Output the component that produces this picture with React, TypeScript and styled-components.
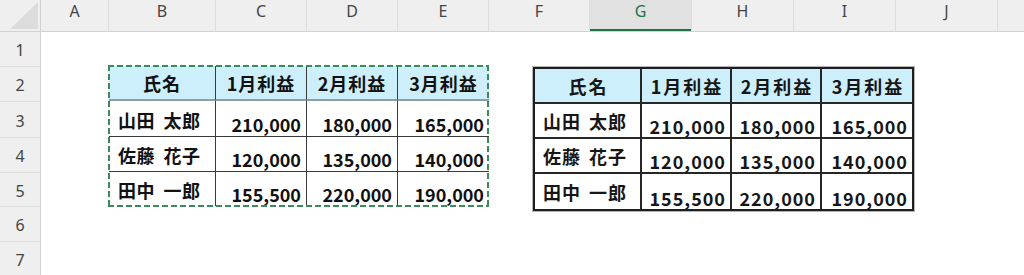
import React from 'react';
import styled, { createGlobalStyle } from 'styled-components';

const GlobalStyle = createGlobalStyle`
  html, body {
    margin: 0;
    padding: 0;
    background: #ffffff;
  }
  body {
    width: 1024px;
    height: 275px;
    overflow: hidden;
  }
`;

const columns = [
  { label: 'A', width: 68 },
  { label: 'B', width: 107 },
  { label: 'C', width: 91 },
  { label: 'D', width: 91 },
  { label: 'E', width: 91 },
  { label: 'F', width: 101 },
  { label: 'G', width: 102, selected: true },
  { label: 'H', width: 102 },
  { label: 'I', width: 102 },
  { label: 'J', width: 102 },
  { label: '', width: 40 },
];

const rowHeights = [35, 35, 36, 35, 34, 35, 35];

const headers = ['氏名', '1月利益', '2月利益', '3月利益'];

const people = [
  { name: '山田 太郎', values: ['210,000', '180,000', '165,000'] },
  { name: '佐藤 花子', values: ['120,000', '135,000', '140,000'] },
  { name: '田中 一郎', values: ['155,500', '220,000', '190,000'] },
];

export default function App() {
  return (
    <>
      <GlobalStyle />
      <Sheet>
        <ColumnBar>
          <Corner>
            <svg width="41" height="32" viewBox="0 0 41 32">
              <polygon points="10,29 38,29 38,2" fill="#dcdcdc" />
            </svg>
          </Corner>
          {columns.map((col, i) => (
            <ColumnHead key={i} $width={col.width} $selected={!!col.selected}>
              {col.label}
            </ColumnHead>
          ))}
        </ColumnBar>
        <Body>
          <RowBar>
            {rowHeights.map((h, i) => (
              <RowHead key={i} $height={h}>
                {i + 1}
              </RowHead>
            ))}
          </RowBar>
          <Canvas>
            <SheetTable>
              {headers.map((h, i) => (
                <HeaderCell key={h} $last={i === headers.length - 1}>
                  {h}
                </HeaderCell>
              ))}
              {people.map((p, r) => (
                <React.Fragment key={p.name}>
                  <NameCell $lastRow={r === people.length - 1}>{p.name}</NameCell>
                  {p.values.map((v, c) => (
                    <NumberCell key={c} $lastRow={r === people.length - 1} $last={c === p.values.length - 1}>
                      {v}
                    </NumberCell>
                  ))}
                </React.Fragment>
              ))}
              <Marquee />
            </SheetTable>

            <PictureTable>
              {headers.map((h, i) => (
                <PicHeaderCell key={h} $last={i === headers.length - 1}>
                  {h}
                </PicHeaderCell>
              ))}
              {people.map((p, r) => (
                <React.Fragment key={p.name}>
                  <PicNameCell $lastRow={r === people.length - 1}>{p.name}</PicNameCell>
                  {p.values.map((v, c) => (
                    <PicNumberCell key={c} $lastRow={r === people.length - 1} $last={c === p.values.length - 1}>
                      {v}
                    </PicNumberCell>
                  ))}
                </React.Fragment>
              ))}
            </PictureTable>
          </Canvas>
        </Body>
      </Sheet>
    </>
  );
}

const Sheet = styled.div`
  width: 1024px;
  height: 275px;
  display: flex;
  flex-direction: column;
  background: #ffffff;
  overflow: hidden;
`;

const ColumnBar = styled.div`
  display: flex;
  height: 32px;
  flex-shrink: 0;
  background: #efefef;
  border-bottom: 1px solid #d2d2d2;
  box-sizing: border-box;
`;

const Corner = styled.div`
  width: 41px;
  flex-shrink: 0;
  border-right: 1px solid #d2d2d2;
  box-sizing: border-box;
  svg {
    display: block;
  }
`;

const ColumnHead = styled.div<{ $width: number; $selected: boolean }>`
  width: ${({ $width }) => $width}px;
  flex-shrink: 0;
  box-sizing: border-box;
  border-right: 1px solid #dddddd;
  display: flex;
  justify-content: center;
  padding-top: 1px;
  font-family: 'Noto Sans', 'Open Sans', sans-serif;
  font-size: 16px;
  line-height: 20px;
  color: ${({ $selected }) => ($selected ? '#217346' : '#444444')};
  background: ${({ $selected }) => ($selected ? '#e1e1e1' : 'transparent')};
  box-shadow: ${({ $selected }) => ($selected ? 'inset 0 -2px 0 #217346' : 'none')};
`;

const Body = styled.div`
  display: flex;
  flex: 1;
`;

const RowBar = styled.div`
  width: 41px;
  flex-shrink: 0;
  background: #efefef;
  border-right: 1px solid #d2d2d2;
  box-sizing: border-box;
  display: flex;
  flex-direction: column;
`;

const RowHead = styled.div<{ $height: number }>`
  height: ${({ $height }) => $height}px;
  flex-shrink: 0;
  box-sizing: border-box;
  border-bottom: 1px solid #dddddd;
  display: flex;
  align-items: center;
  justify-content: center;
  padding-top: 2px;
  font-family: 'Noto Sans', 'Open Sans', sans-serif;
  font-size: 16px;
  color: #444444;
`;

const Canvas = styled.div`
  flex: 1;
  display: flex;
  align-items: flex-start;
  gap: 44px;
  padding: 34px 0 0 68px;
  font-family: 'Noto Sans CJK JP', 'Noto Sans', sans-serif;
  font-weight: 700;
  font-size: 18px;
  color: #111111;
`;

/* table copied in the sheet, still showing Excel's marching ants */

const SheetTable = styled.div`
  position: relative;
  display: grid;
  grid-template-columns: 107px 91px 91px 91px;
  grid-template-rows: 35px 36px 35px 34px;
`;

const Cell = styled.div<{ $last?: boolean; $lastRow?: boolean }>`
  box-sizing: border-box;
  display: flex;
  white-space: nowrap;
  border-right: ${({ $last }) => ($last ? 'none' : '1px solid #3a3a3a')};
  border-bottom: ${({ $lastRow }) => ($lastRow ? 'none' : '1px solid #3a3a3a')};
`;

const HeaderCell = styled(Cell)`
  background: #cdeefb;
  align-items: center;
  justify-content: center;
  letter-spacing: 1px;
  border-bottom: 2px solid #8e9ea6;
`;

const NameCell = styled(Cell)`
  align-items: center;
  padding: 2px 0 0 9px;
  letter-spacing: 0.5px;
  word-spacing: 4px;
`;

const NumberCell = styled(Cell)`
  align-items: flex-end;
  justify-content: flex-end;
  padding: 0 5px 1px 0;
  line-height: 22px;
`;

const Marquee = styled.div`
  position: absolute;
  inset: -1px 0 -1px -1px;
  pointer-events: none;
  background:
    repeating-linear-gradient(90deg, #3c8a5b 0 6px, transparent 6px 9px) top left / 100% 2px no-repeat,
    repeating-linear-gradient(90deg, #3c8a5b 0 6px, transparent 6px 9px) bottom left / 100% 2px no-repeat,
    repeating-linear-gradient(180deg, #3c8a5b 0 6px, transparent 6px 9px) top left / 2px 100% no-repeat,
    repeating-linear-gradient(180deg, #3c8a5b 0 6px, transparent 6px 9px) top right / 2px 100% no-repeat;
`;

/* the same table pasted as a picture */

const PictureTable = styled.div`
  margin-top: 1px;
  display: grid;
  grid-template-columns: 107px 90px 90px 90px;
  grid-template-rows: 35px 35px 35px 35px;
  box-sizing: border-box;
  border: 2px solid #1e1e1e;
  box-shadow: 0 0 0 1px #b4b4b4;
  color: #161616;
`;

const PicCell = styled.div<{ $last?: boolean; $lastRow?: boolean }>`
  box-sizing: border-box;
  display: flex;
  white-space: nowrap;
  border-right: ${({ $last }) => ($last ? 'none' : '2px solid #262626')};
  border-bottom: ${({ $lastRow }) => ($lastRow ? 'none' : '2px solid #262626')};
`;

const PicHeaderCell = styled(PicCell)`
  background: #cdeefb;
  align-items: center;
  justify-content: center;
  letter-spacing: 2px;
  padding-left: 2px;
`;

const PicNameCell = styled(PicCell)`
  align-items: center;
  padding: 0 0 0 8px;
  letter-spacing: 1px;
  word-spacing: 3px;
`;

const PicNumberCell = styled(PicCell)`
  align-items: flex-end;
  justify-content: flex-end;
  padding: 0 4px 0 0;
  line-height: 22px;
  letter-spacing: 1px;
`;
